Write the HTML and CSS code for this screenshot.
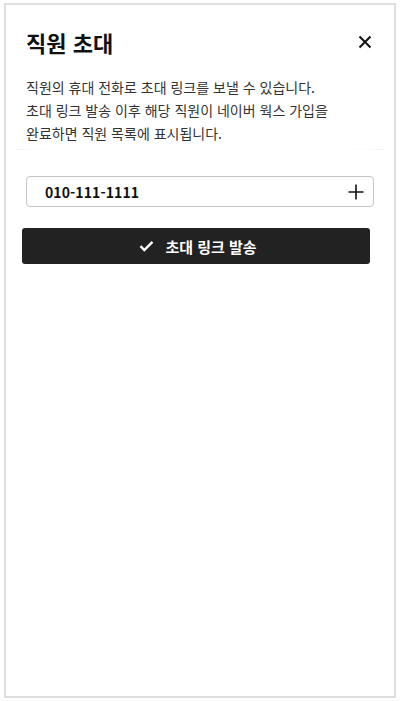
FILE: index.html
```html
<!DOCTYPE html>
<html lang="ko">
<head>
<meta charset="utf-8">
<title>직원 초대</title>
<link rel="stylesheet" href="styles.css">
</head>
<body>
<div class="frame">
  <header class="head">
    <h1 class="title">직원 초대</h1>
    <button class="close" aria-label="닫기">
      <svg width="14" height="14" viewBox="0 0 14 14"><path d="M1.5 1.5L12.5 12.5M12.5 1.5L1.5 12.5" stroke="#111" stroke-width="2" fill="none"/></svg>
    </button>
  </header>
  <p class="desc">직원의 휴대 전화로 초대 링크를 보낼 수 있습니다.<br>초대 링크 발송 이후 해당 직원이 네이버 웍스 가입을<br>완료하면 직원 목록에 표시됩니다.</p>
  <div class="divider"></div>
  <div class="field">
    <span class="phone">010-111-1111</span>
    <svg class="plus" width="16" height="16" viewBox="0 0 16 16"><path d="M8 0.5V15.5M0.5 8H15.5" stroke="#111" stroke-width="1.6" fill="none"/></svg>
  </div>
  <button class="send">
    <svg width="15" height="12" viewBox="0 0 15 12"><path d="M1.5 6.2L5.3 10L13.5 1.8" stroke="#fff" stroke-width="2.4" fill="none"/></svg>
    <span>초대 링크 발송</span>
  </button>
</div>
</body>
</html>
```

FILE: styles.css
```css
* { box-sizing: border-box; }
html, body { margin: 0; background: #fff; }
body {
  padding: 3px 4px;
  font-family: "Noto Sans CJK KR", "Noto Sans", sans-serif;
  color: #111;
}
.frame {
  height: 695px;
  border: 2px solid #dedede;
  background: #fff;
}
.head {
  display: flex;
  align-items: center;
  justify-content: space-between;
  padding: 22px 22px 0 20px;
}
.title {
  margin: 0;
  font-size: 22px;
  line-height: 30px;
  font-weight: 700;
  color: #111;
}
.close {
  border: 0;
  background: none;
  padding: 0;
  width: 14px;
  height: 14px;
  display: flex;
}
.desc {
  margin: 19px 20px 0 20px;
  font-size: 14px;
  line-height: 23px;
  color: #333;
}
.divider {
  margin: 4px 10px 0;
  height: 1px;
  background: linear-gradient(to right, #f2f2f2, #fcfcfc 5%, #fff 30%, #fff 70%, #fcfcfc 95%, #f2f2f2);
}
.field {
  margin: 26px 20px 0 20px;
  height: 31px;
  border: 1px solid #c4c4c4;
  border-radius: 4px;
  display: flex;
  align-items: center;
  justify-content: space-between;
  padding: 0 9px 0 18px;
}
.phone {
  font-size: 14px;
  font-weight: 700;
  color: #111;
  letter-spacing: 0.1px;
}
.send {
  margin: 21px 24px 0 16px;
  width: calc(100% - 40px);
  height: 36px;
  border: 0;
  border-radius: 3px;
  background: #222;
  color: #fff;
  display: flex;
  align-items: center;
  justify-content: center;
  gap: 11px;
  font-family: inherit;
  font-size: 15px;
  font-weight: 700;
  padding: 0 0 0 4px;
}
```
